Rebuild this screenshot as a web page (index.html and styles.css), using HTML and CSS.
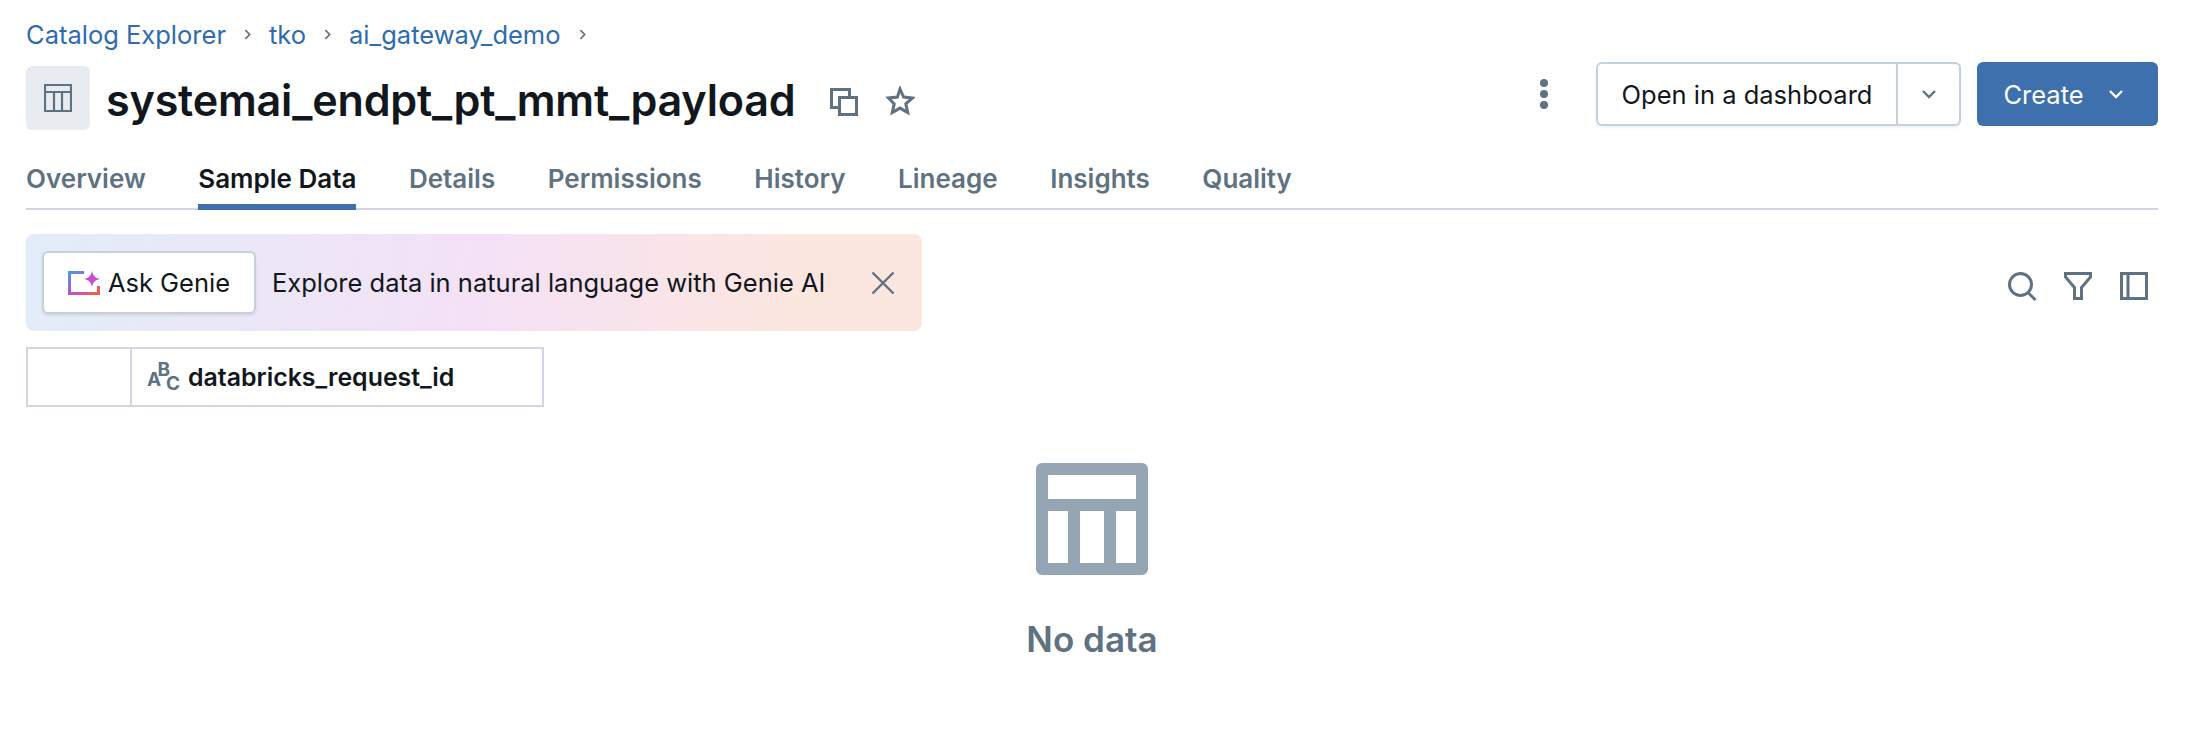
FILE: index.html
```html
<!DOCTYPE html>
<html lang="en">
<head>
    <meta charset="UTF-8">
    <title>systemai_endpt_pt_mmt_payload - Catalog Explorer</title>
    <link rel="stylesheet" href="styles.css">
</head>
<body>
    <div class="page">
        <nav class="breadcrumb">
            <a>Catalog Explorer</a>
            <svg class="crumb-sep" viewBox="0 0 10 14"><path d="M3 3l4 4-4 4"/></svg>
            <a>tko</a>
            <svg class="crumb-sep" viewBox="0 0 10 14"><path d="M3 3l4 4-4 4"/></svg>
            <a>ai_gateway_demo</a>
            <svg class="crumb-sep" viewBox="0 0 10 14"><path d="M3 3l4 4-4 4"/></svg>
        </nav>

        <header class="title-row">
            <div class="title-icon">
                <svg viewBox="0 0 28 28"><path d="M1 1h26v26H1zM1 8h26M10 8v19M18 8v19"/></svg>
            </div>
            <h1>systemai_endpt_pt_mmt_payload</h1>
            <svg class="title-action copy" viewBox="0 0 28 28"><path d="M9.500 19.500h-8v-18h18v8M9.500 9.500h17v17h-17z"/></svg>
            <svg class="title-action star" viewBox="0 0 30 30"><path d="M15 3l3.600 8.100 8.900.9-6.700 5.900 1.900 8.700-7.700-4.500-7.700 4.500 1.900-8.700L3.500 12l8.900-.9z"/></svg>
            <div class="title-right">
                <div class="kebab"><span></span><span></span><span></span></div>
                <div class="split-btn">
                    <button class="split-main">Open in a dashboard</button>
                    <button class="split-drop">
                        <svg class="chev" viewBox="0 0 16 10"><path d="M2 2l6 6 6-6"/></svg>
                    </button>
                </div>
                <button class="create-btn">
                    Create
                    <svg class="chev" viewBox="0 0 16 10"><path d="M2 2l6 6 6-6"/></svg>
                </button>
            </div>
        </header>

        <div class="tabs">
            <a class="tab">Overview</a>
            <a class="tab active">Sample Data</a>
            <a class="tab">Details</a>
            <a class="tab">Permissions</a>
            <a class="tab">History</a>
            <a class="tab">Lineage</a>
            <a class="tab">Insights</a>
            <a class="tab">Quality</a>
        </div>

        <div class="toolbar">
            <div class="genie-banner">
                <button class="genie-btn">
                    <svg viewBox="0 0 32 24" class="genie-icon">
                        <defs>
                            <linearGradient id="genieGrad" x1="0" y1="0" x2="1" y2="1">
                                <stop offset="0" stop-color="#4a9be0"/>
                                <stop offset="0.5" stop-color="#c04fd0"/>
                                <stop offset="1" stop-color="#f2604a"/>
                            </linearGradient>
                        </defs>
                        <path class="genie-frame" d="M16 1.500H1.500v21h29V15"/>
                        <path class="genie-star" d="M24 0c1 4.500 3 6.800 8 8-5 1.200-7 3.500-8 8-1-4.500-3-6.800-8-8 5-1.200 7-3.500 8-8z"/>
                    </svg>
                    Ask Genie
                </button>
                <span class="genie-text">Explore data in natural language with Genie AI</span>
                <svg class="genie-close" viewBox="0 0 24 24"><path d="M1.500 1.500l21 21M22.500 1.500l-21 21"/></svg>
            </div>
            <div class="tool-icons">
                <svg viewBox="0 0 30 30"><circle cx="13.500" cy="12.500" r="11"/><path d="M21.500 21l7 7"/></svg>
                <svg viewBox="0 0 30 30"><path d="M2.500 1.500h25V5l-9 10.500v11h-7v-11L2.500 5z"/></svg>
                <svg viewBox="0 0 30 30"><path d="M2.500 1.500h25v25h-25zM9 1.500v25"/></svg>
            </div>
        </div>

        <div class="data-table">
            <div class="index-cell"></div>
            <div class="col-cell">
                <svg class="abc-icon" viewBox="0 0 32 32">
                    <text x="-1" y="25">A</text>
                    <text x="9.500" y="15">B</text>
                    <text x="18" y="29">C</text>
                </svg>
                <span>databricks_request_id</span>
            </div>
        </div>

        <div class="empty-state">
            <svg viewBox="0 0 112 112"><path fill-rule="evenodd" d="M6 0h100a6 6 0 0 1 6 6v100a6 6 0 0 1-6 6H6a6 6 0 0 1-6-6V6a6 6 0 0 1 6-6zM12 12v24h88V12zM12 48v52h20V48zM44 48v52h24V48zM80 48v52h20V48z"/></svg>
            <div class="empty-text">No data</div>
        </div>
    </div>
</body>
</html>
```

FILE: styles.css
```css
* {
    box-sizing: border-box;
}

body {
    margin: 0;
    background: #fff;
    color: #11171c;
    font-family: 'Inter', sans-serif;
    font-size: 25.5px;
}

.page {
    padding: 19px 28px 0 26px;
}

/* Breadcrumb */
.breadcrumb {
    display: flex;
    align-items: center;
    gap: 16px;
    height: 30px;
    color: #2f6cad;
}

.crumb-sep {
    width: 11px;
    height: 15px;
    fill: none;
    stroke: #5f7281;
    stroke-width: 1.6;
}

/* Title row */
.title-row {
    display: flex;
    align-items: flex-start;
    height: 64px;
    margin-top: 17px;
}

.title-icon {
    width: 64px;
    height: 64px;
    border-radius: 6px;
    background: #e8ecf0;
    display: flex;
    align-items: center;
    justify-content: center;
    margin-right: 16px;
}

.title-icon svg {
    width: 28px;
    height: 28px;
    fill: none;
    stroke: #5f7281;
    stroke-width: 2.2;
}

h1 {
    margin: 5px 0 0;
    font-size: 43.1px;
    line-height: 58px;
    font-weight: 600;
    letter-spacing: -0.2px;
}

.title-action {
    fill: none;
    stroke: #5f7281;
    stroke-width: 3;
    flex-shrink: 0;
}

.title-action.copy {
    width: 28px;
    height: 28px;
    margin: 22px 0 0 35px;
}

.title-action.star {
    width: 30px;
    height: 30px;
    margin: 20px 0 0 27px;
}

.title-right {
    margin: -4px 0 0 auto;
    display: flex;
    align-items: center;
}

.kebab {
    display: flex;
    flex-direction: column;
    gap: 3px;
    margin-right: 48px;
}

.kebab span {
    width: 8px;
    height: 8px;
    border-radius: 50%;
    background: #5f7281;
}

.split-btn {
    display: flex;
    height: 64px;
    border: 2px solid #c5d0db;
    border-radius: 6px;
    box-shadow: 0 2px 3px rgba(0, 0, 0, 0.05);
    margin-right: 16px;
}

.split-btn button {
    background: none;
    border: none;
    font-family: inherit;
    color: #11171c;
    font-size: 25.5px;
    padding: 0;
}

.split-main {
    width: 300px;
    border-right: 2px solid #c5d0db !important;
}

.split-drop {
    width: 61px;
    display: flex;
    align-items: center;
    justify-content: center;
}

.chev {
    width: 16px;
    height: 10px;
    fill: none;
    stroke: #5f7281;
    stroke-width: 2.4;
}

.create-btn {
    width: 181px;
    height: 64px;
    display: flex;
    align-items: center;
    justify-content: center;
    gap: 24px;
    padding: 0 8px 0 0;
    border: none;
    border-radius: 6px;
    background: #3d70ad;
    color: #fff;
    font-family: inherit;
    font-size: 25.5px;
}

.create-btn .chev {
    stroke: #fff;
}

/* Tabs */
.tabs {
    display: flex;
    gap: 52.500px;
    height: 60px;
    margin-top: 20px;
    border-bottom: 2px solid #d1d7e2;
}

.tab {
    height: 60px;
    padding-top: 13px;
    font-size: 26px;
    font-weight: 600;
    color: #5f7281;
}

.tab.active {
    color: #11171c;
    border-bottom: 6px solid #3d70ad;
}

/* Banner row */
.toolbar {
    display: flex;
    justify-content: space-between;
    align-items: center;
    margin-top: 24px;
}

.genie-banner {
    width: 896px;
    height: 97px;
    display: flex;
    align-items: center;
    padding-left: 16px;
    border-radius: 8px;
    background: linear-gradient(100deg, #e2edf8 0%, #f4e1f6 50%, #fce6e0 85%);
}

.genie-btn {
    width: 214px;
    height: 63px;
    display: flex;
    align-items: center;
    justify-content: center;
    gap: 8px;
    background: #fff;
    border: 2px solid #c5d0db;
    border-radius: 6px;
    box-shadow: 0 2px 3px rgba(0, 0, 0, 0.08);
    font-family: inherit;
    font-size: 25.5px;
    color: #11171c;
}

.genie-icon {
    width: 32px;
    height: 24px;
}

.genie-frame {
    fill: none;
    stroke: url(#genieGrad);
    stroke-width: 3;
}

.genie-star {
    fill: #c84fcc;
}

.genie-text {
    margin-left: 16px;
}

.genie-close {
    width: 24px;
    height: 24px;
    margin-left: auto;
    margin-right: 27px;
    fill: none;
    stroke: #5f7281;
    stroke-width: 2.4;
}

.tool-icons {
    display: flex;
    gap: 26px;
    margin-right: 9px;
    padding-top: 9px;
}

.tool-icons svg {
    width: 30px;
    height: 30px;
    fill: none;
    stroke: #5f7281;
    stroke-width: 3;
}

/* Table header */
.data-table {
    display: flex;
    width: 518px;
    height: 60px;
    margin-top: 16px;
    border: 2px solid #d1d7e2;
}

.index-cell {
    width: 104px;
    border-right: 2px solid #d1d7e2;
}

.col-cell {
    display: flex;
    align-items: center;
    gap: 8px;
    padding-left: 16px;
    font-size: 24.9px;
    font-weight: 600;
}

.abc-icon {
    width: 32px;
    height: 32px;
    overflow: visible;
    fill: #5f7281;
    font-family: 'Inter', sans-serif;
    font-size: 19px;
    font-weight: 700;
}

/* Empty state */
.empty-state {
    display: flex;
    flex-direction: column;
    align-items: center;
    margin-top: 56px;
}

.empty-state svg {
    width: 112px;
    height: 112px;
    fill: #95a5b4;
}

.empty-text {
    margin-top: 43px;
    font-size: 35px;
    font-weight: 600;
    color: #5f7281;
}
```
